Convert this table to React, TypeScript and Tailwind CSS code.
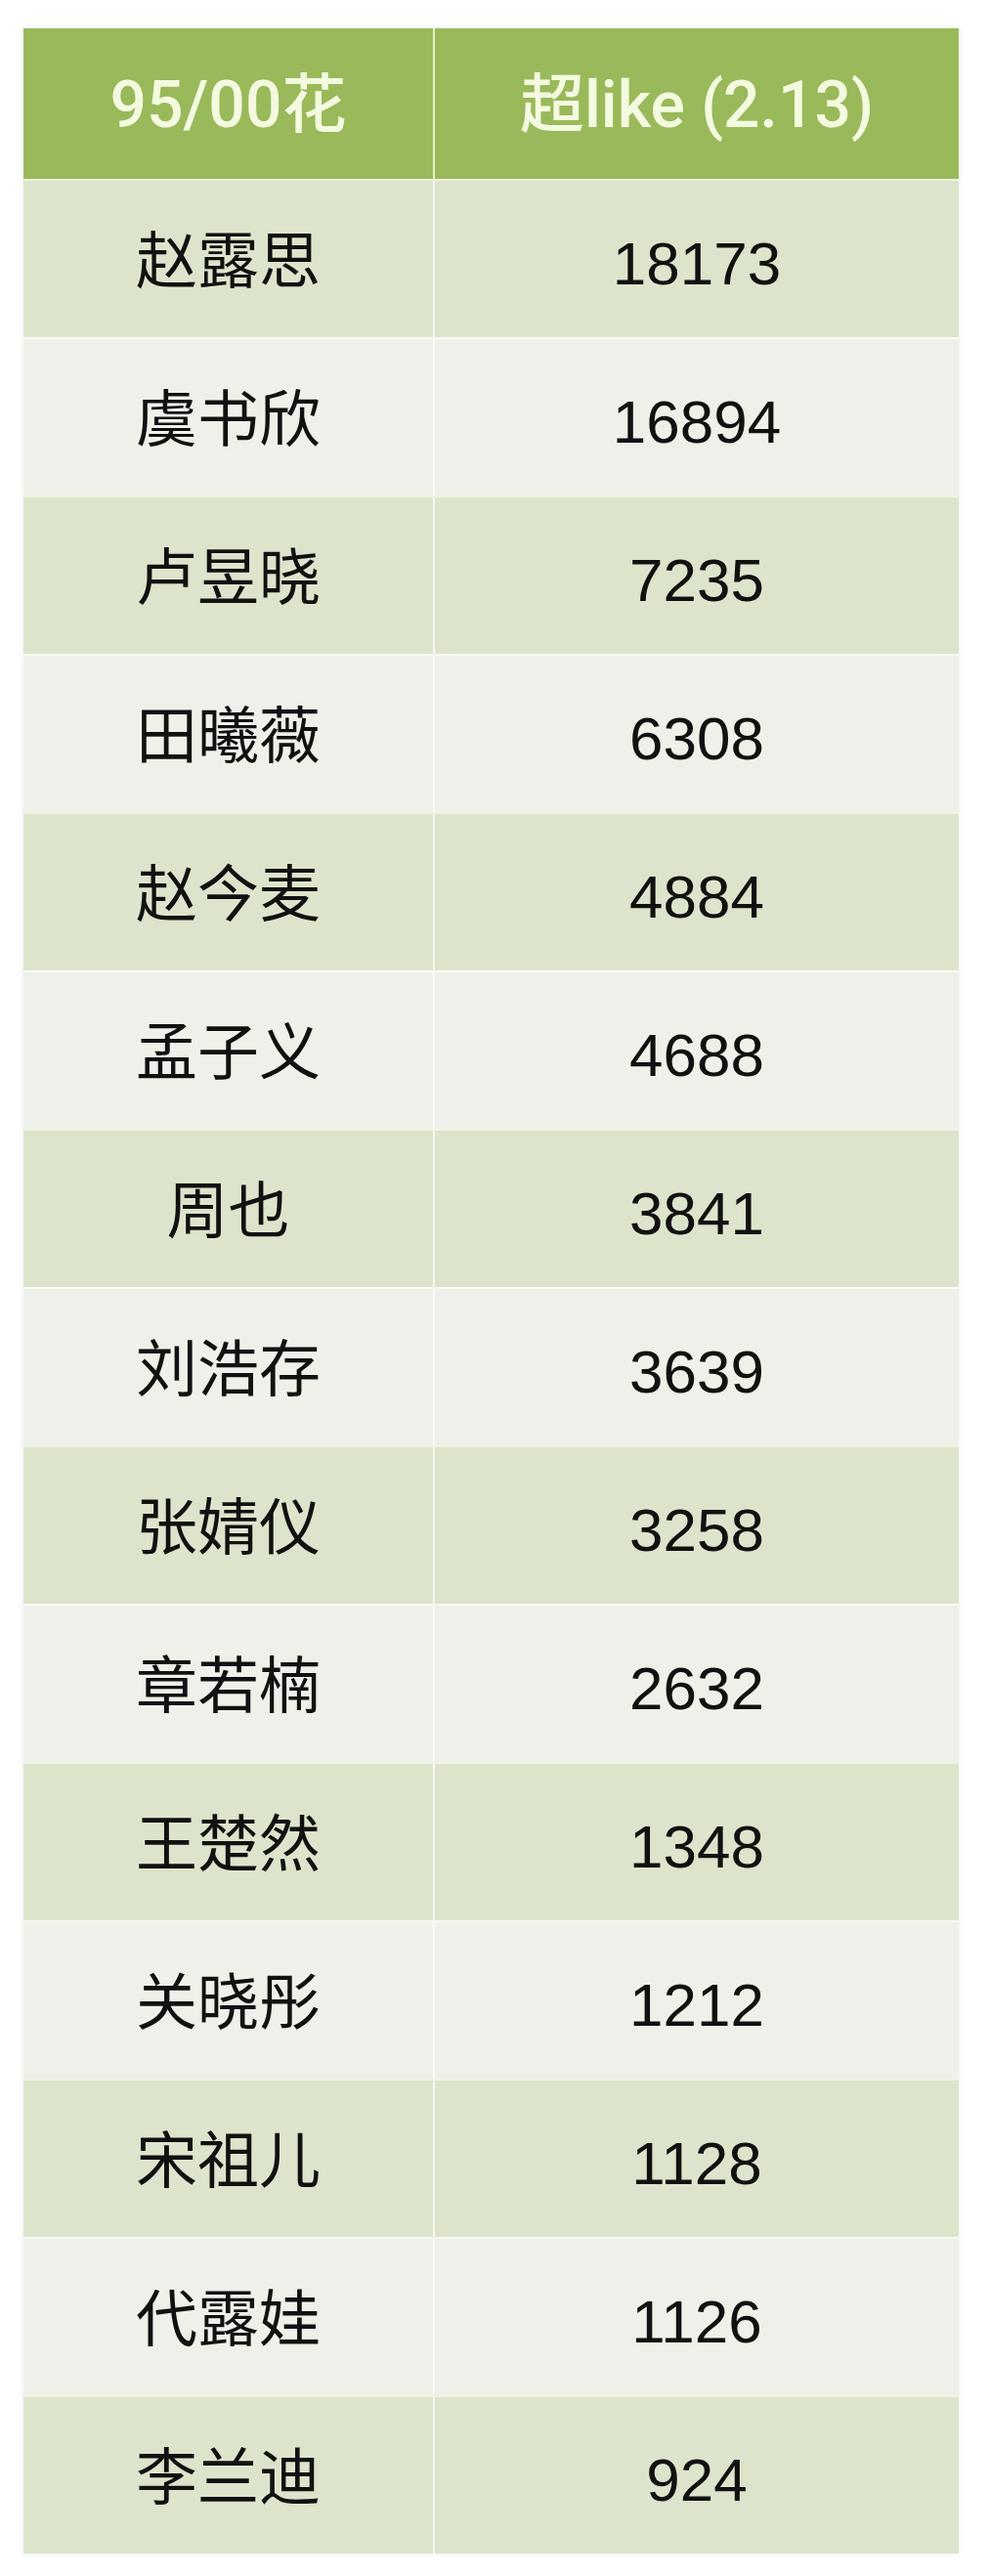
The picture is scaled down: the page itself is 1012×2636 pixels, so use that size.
const rows: [string, string][] = [
  ["赵露思", "18173"],
  ["虞书欣", "16894"],
  ["卢昱晓", "7235"],
  ["田曦薇", "6308"],
  ["赵今麦", "4884"],
  ["孟子义", "4688"],
  ["周也", "3841"],
  ["刘浩存", "3639"],
  ["张婧仪", "3258"],
  ["章若楠", "2632"],
  ["王楚然", "1348"],
  ["关晓彤", "1212"],
  ["宋祖儿", "1128"],
  ["代露娃", "1126"],
  ["李兰迪", "924"],
];

const font = { fontFamily: '"Liberation Sans", "Noto Sans CJK SC", sans-serif' };
const headFont = { fontFamily: 'Roboto, "Noto Sans CJK SC", sans-serif' };

export default function App() {
  return (
    <div className="min-h-[2636px] w-[1012px] bg-white pt-[29px]" style={font}>
      <div className="ml-[24px] w-[957px] shadow-[0_0_6px_rgba(0,0,0,0.08)]">
        <div className="grid h-[154px] grid-cols-[419px_1fr] gap-x-[2px] bg-[#e6f2c6]">
          <div className="flex items-center justify-center bg-[#99b95a] pt-[2px] text-[66px] font-medium text-[#f4fae0]" style={headFont}>
            95/00花
          </div>
          <div className="flex items-center justify-center bg-[#99b95a] pt-[2px] text-[66px] font-medium text-[#f4fae0]" style={headFont}>
            超like (2.13)
          </div>
        </div>
        <div className="flex flex-col">
          {rows.map(([name, value], i) => (
            <div
              key={name}
              className={`grid h-[162px] grid-cols-[419px_1fr] gap-x-[2px] border-t-2 ${i % 2 === 0 ? "border-[#eef3e2] bg-[#f6f8f1]" : "border-[#f8faf3] bg-[#f8faf3]"}`}
            >
              <div className={`flex items-center justify-center pt-[4px] text-[63px] text-[#111] ${i % 2 === 0 ? "bg-[#dce5cb]" : "bg-[#eef1e9]"}`}>
                {name}
              </div>
              <div className={`flex items-center justify-center pt-[8px] text-[62px] text-[#111] ${i % 2 === 0 ? "bg-[#dce5cb]" : "bg-[#eef1e9]"}`}>
                {value}
              </div>
            </div>
          ))}
        </div>
      </div>
    </div>
  );
}
